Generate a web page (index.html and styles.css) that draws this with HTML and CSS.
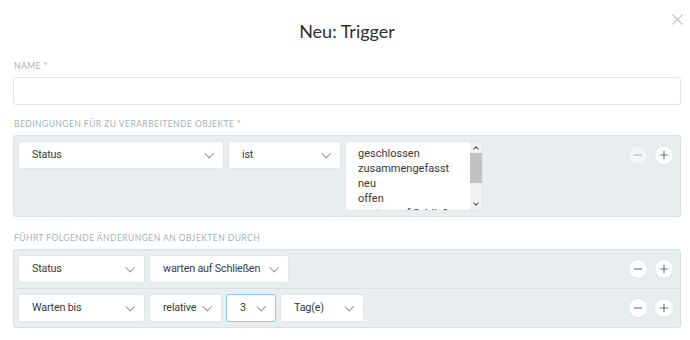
FILE: index.html
```html
<!DOCTYPE html>
<html lang="de">
<head>
  <meta charset="UTF-8" />
  <meta name="viewport" content="width=device-width, initial-scale=1.0" />
  <title>Neu: Trigger</title>
  <link rel="stylesheet" href="styles.css">
</head>
<body>
  <div class="modal">
    <div class="modal-header">
      <span></span>
      <h1 class="modal-title">Neu: Trigger</h1>
      <span class="close" aria-label="Schließen">
        <svg width="11" height="11" viewBox="0 0 11 11"><path d="M0.5 0.5L10.5 10.5M10.5 0.5L0.5 10.5" stroke="#c4c4c4" stroke-width="1.1" fill="none"/></svg>
      </span>
    </div>

    <div class="form-group">
      <label class="form-label">Name *</label>
      <input class="form-input" type="text">
    </div>

    <div class="form-group spaced">
      <label class="form-label">Bedingungen für zu verarbeitende Objekte *</label>
      <div class="panel">
        <div class="panel-row">
          <div class="controls">
            <div class="select w-206">Status</div>
            <div class="select w-113">ist</div>
            <div class="listbox">
              <div class="listbox-items">
                <div>geschlossen</div>
                <div>zusammengefasst</div>
                <div>neu</div>
                <div>offen</div>
                <div>warten auf Schließen</div>
              </div>
              <div class="scrollbar">
                <span class="arrow up"></span>
                <span class="thumb"></span>
                <span class="arrow down"></span>
              </div>
            </div>
          </div>
          <div class="buttons">
            <span class="circle disabled"><svg width="8" height="8" viewBox="0 0 8 8"><path d="M0 4H8" stroke="#777" stroke-width="1.2"/></svg></span>
            <span class="circle"><svg width="8" height="8" viewBox="0 0 8 8"><path d="M0 4H8M4 0V8" stroke="#777" stroke-width="1.2"/></svg></span>
          </div>
        </div>
      </div>
    </div>

    <div class="form-group">
      <label class="form-label">Führt folgende Änderungen an Objekten durch</label>
      <div class="panel">
        <div class="panel-row">
          <div class="controls">
            <div class="select w-127">Status</div>
            <div class="select w-140">warten auf Schließen</div>
          </div>
          <div class="buttons">
            <span class="circle"><svg width="8" height="8" viewBox="0 0 8 8"><path d="M0 4H8" stroke="#777" stroke-width="1.2"/></svg></span>
            <span class="circle"><svg width="8" height="8" viewBox="0 0 8 8"><path d="M0 4H8M4 0V8" stroke="#777" stroke-width="1.2"/></svg></span>
          </div>
        </div>
        <div class="panel-row">
          <div class="controls">
            <div class="select w-127">Warten bis</div>
            <div class="select w-73">relative</div>
            <div class="select w-50 focused">3</div>
            <div class="select w-84">Tag(e)</div>
          </div>
          <div class="buttons">
            <span class="circle"><svg width="8" height="8" viewBox="0 0 8 8"><path d="M0 4H8" stroke="#777" stroke-width="1.2"/></svg></span>
            <span class="circle"><svg width="8" height="8" viewBox="0 0 8 8"><path d="M0 4H8M4 0V8" stroke="#777" stroke-width="1.2"/></svg></span>
          </div>
        </div>
      </div>
    </div>
  </div>
</body>
</html>
```

FILE: styles.css
```css
body {
  margin: 0;
  background: #fff;
  font-family: Roboto, "Noto Sans", sans-serif;
  color: #38393b;
}
.modal {
  padding: 0 9px 0 13px;
}
.modal-header {
  display: grid;
  grid-template-columns: 1fr auto 1fr;
  align-items: start;
  padding-top: 19px;
  height: 41px;
}
.modal-title {
  margin: 0;
  font-family: Lato, sans-serif;
  font-size: 18px;
  font-weight: 400;
  line-height: 24px;
  color: #2f3032;
}
.close {
  justify-self: end;
  margin-top: -5px;
  margin-right: -2px;
  line-height: 0;
}
.form-group {
  margin-bottom: 13px;
}
.form-group.spaced {
  margin-bottom: 15px;
}
.form-label {
  display: block;
  margin: 0 0 5px 1px;
  font-family: Lato, sans-serif;
  font-size: 8.5px;
  line-height: 12px;
  letter-spacing: 0.45px;
  text-transform: uppercase;
  color: #a7b2ba;
}
.form-input {
  display: block;
  box-sizing: border-box;
  width: 100%;
  height: 28px;
  margin: 0;
  border: 1px solid #e3e6e8;
  border-radius: 3px;
  background: #fff;
}
.panel {
  border: 1px solid #d9e0e4;
  border-radius: 3px;
  background: #e8edf0;
}
.panel-row {
  display: flex;
  justify-content: space-between;
  padding: 5px 6px 5px 4px;
}
.panel-row + .panel-row {
  border-top: 1px solid #d9e0e4;
}
.controls {
  display: flex;
  gap: 4px;
  align-items: flex-start;
}
.select {
  position: relative;
  box-sizing: border-box;
  height: 28px;
  padding: 0 20px 0 13px;
  border: 1px solid #e1e6e9;
  border-radius: 3px;
  background: #fff;
  font-size: 10.8px;
  letter-spacing: -0.2px;
  line-height: 26px;
  white-space: nowrap;
  color: #3a3b3d;
}
.select::after {
  content: "";
  position: absolute;
  right: 11px;
  top: 8px;
  width: 5.5px;
  height: 5.5px;
  border-right: 1px solid #8a8f93;
  border-bottom: 1px solid #8a8f93;
  transform: rotate(45deg);
}
.select.focused {
  border-color: #8cc8f0;
}
.w-206 { width: 206px; }
.w-113 { width: 113px; }
.w-127 { width: 127px; }
.w-140 { width: 140px; }
.w-73 { width: 73px; }
.w-50 { width: 50px; }
.w-84 { width: 84px; }
.listbox {
  display: flex;
  box-sizing: border-box;
  width: 138px;
  height: 70px;
  border: 1px solid #e1e6e9;
  border-radius: 3px;
  background: #fff;
  overflow: hidden;
}
.listbox-items {
  flex: 1;
  padding: 4px 0 0 12px;
  font-size: 11px;
  line-height: 15px;
  white-space: nowrap;
  overflow: hidden;
}
.scrollbar {
  display: flex;
  flex-direction: column;
  width: 12px;
  background: #f1f1f1;
}
.arrow {
  height: 11px;
  position: relative;
}
.arrow::after {
  content: "";
  position: absolute;
  left: 4px;
  width: 3px;
  height: 3px;
  border-left: 1.5px solid #505050;
  border-top: 1.5px solid #505050;
}
.arrow.up::after {
  top: 5px;
  transform: rotate(45deg);
}
.arrow.down::after {
  top: 2px;
  transform: rotate(225deg);
}
.thumb {
  height: 30px;
  background: #c1c1c1;
}
.scrollbar .down {
  margin-top: auto;
}
.buttons {
  display: flex;
  gap: 6px;
  padding-top: 4px;
}
.circle {
  display: flex;
  align-items: center;
  justify-content: center;
  box-sizing: border-box;
  width: 20px;
  height: 20px;
  border: 1px solid #dde3e7;
  border-radius: 50%;
  background: #fff;
}
.circle.disabled {
  opacity: 0.45;
}
```
